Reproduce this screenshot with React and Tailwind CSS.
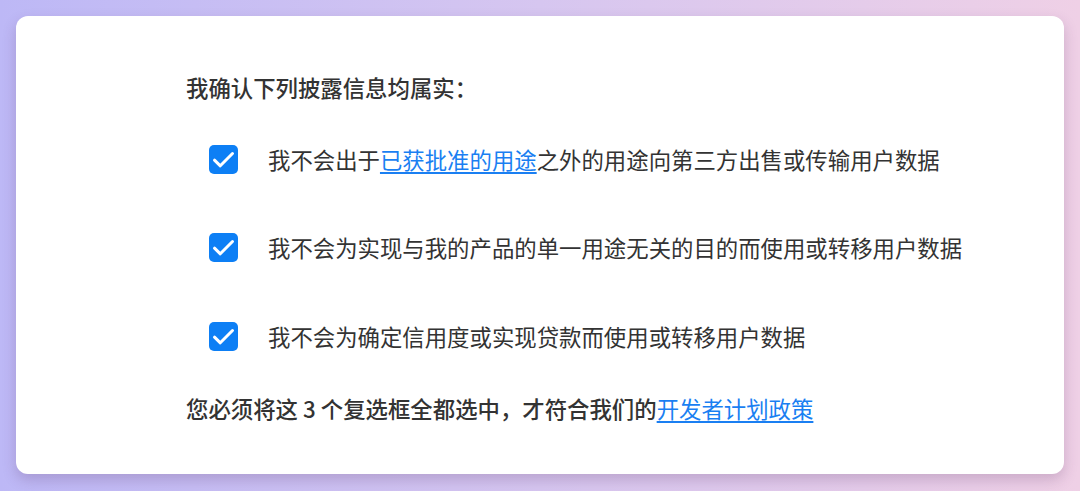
import React from "react";

const Check = () => (
  <div className="w-[29px] h-[29px] rounded-[5px] bg-[#0d7ff5] shrink-0">
    <svg width="29" height="29" viewBox="0 0 29 29" fill="none">
      <path d="M5.5 15.2 L11.3 20.8 L23.5 8.5" stroke="white" strokeWidth="3" strokeLinecap="round" strokeLinejoin="round" />
    </svg>
  </div>
);

const Item = ({ children, className }) => (
  <div className={`flex items-center h-[32px] pl-[23px] ${className}`}>
    <Check />
    <p className="ml-[30px] leading-[32px]">{children}</p>
  </div>
);

const Link = ({ children }) => (
  <a href="#" className="text-[#1a7ff2] font-normal underline underline-offset-[3px] decoration-[1.5px]">
    {children}
  </a>
);

export default function App() {
  return (
    <div className="w-[1080px] h-[491px] bg-linear-to-r from-[#bdb8f6] via-[#d6c6f0] to-[#efd0e6] p-4 overflow-hidden">
      <div
        className="h-[458px] bg-white rounded-[12px] shadow-[0_6px_14px_rgba(80,40,90,0.22)] pl-[170px] pt-[55px] text-[#333] text-[22.4px]"
        style={{ fontFamily: '"Noto Sans CJK SC", "Noto Sans", sans-serif' }}
      >
        <p className="leading-[32px] font-medium">我确认下列披露信息均属实：</p>
        <Item className="mt-[40px]">
          我不会出于<Link>已获批准的用途</Link>之外的用途向第三方出售或传输用户数据
        </Item>
        <Item className="mt-[56px]">
          我不会为实现与我的产品的单一用途无关的目的而使用或转移用户数据
        </Item>
        <Item className="mt-[57px]">我不会为确定信用度或实现贷款而使用或转移用户数据</Item>
        <p className="mt-[40px] leading-[32px] font-medium">
          您必须将这 3 个复选框全都选中，才符合我们的<Link>开发者计划政策</Link>
        </p>
      </div>
    </div>
  );
}
